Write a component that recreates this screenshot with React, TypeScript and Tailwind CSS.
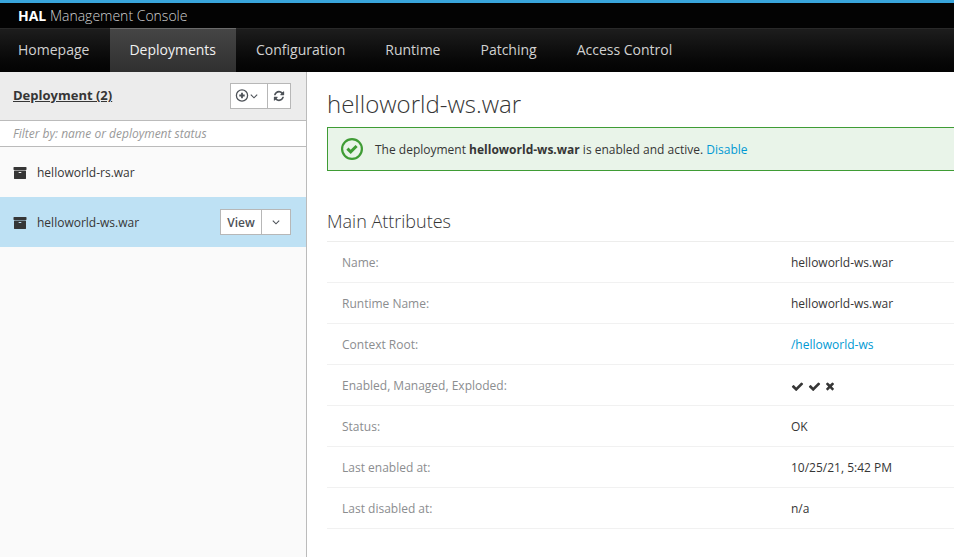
import type { ReactNode } from "react";

const ARCHIVE =
  "M1088 832q0-26-19-45t-45-19h-256q-26 0-45 19t-19 45 19 45 45 19h256q26 0 45-19t19-45zm576-192v960q0 26-19 45t-45 19h-1408q-26 0-45-19t-19-45v-960q0-26 19-45t45-19h1408q26 0 45 19t19 45zm64-448v256q0 26-19 45t-45 19h-1536q-26 0-45-19t-19-45v-256q0-26 19-45t45-19h1536q26 0 45 19t19 45z";
const CHECK =
  "M1671 566q0 40-28 68l-724 724-136 136q-28 28-68 28t-68-28l-136-136-362-362q-28-28-28-68t28-68l136-136q28-28 68-28t68 28l294 295 656-657q28-28 68-28t68 28l136 136q28 28 28 68z";
const TIMES =
  "M1490 1322q0 40-28 68l-136 136q-28 28-68 28t-68-28l-294-294-294 294q-28 28-68 28t-68-28l-136-136q-28-28-28-68t28-68l294-294-294-294q-28-28-28-68t28-68l136-136q28-28 68-28t68 28l294 294 294-294q28-28 68-28t68 28l136 136q28 28 28 68t-28 68l-294 294 294 294q28 28 28 68z";
const REFRESH =
  "M1639 1056q0 5-1 7-64 268-268 434.5t-478 166.5q-146 0-282.5-55t-243.5-157l-129 129q-19 19-45 19t-45-19-19-45v-448q0-26 19-45t45-19h448q26 0 45 19t19 45-19 45l-137 137q71 66 161 102t187 36q134 0 250-65t186-179q11-17 53-117 8-23 30-23h192q13 0 22.5 9.5t9.5 22.5zm25-800v448q0 26-19 45t-45 19h-448q-26 0-45-19t-19-45 19-45l138-138q-148-137-349-137-134 0-250 65t-186 179q-11 17-53 117-8 23-30 23h-199q-13 0-22.5-9.5t-9.5-22.5v-7q65-268 270-434.5t480-166.5q146 0 284 55.5t245 156.5l130-129q19-19 45-19t45 19 19 45z";

function Glyph({ d, className, viewBox = "0 0 1792 1792" }: { d: string; className: string; viewBox?: string }) {
  return (
    <svg viewBox={viewBox} className={className} fill="currentColor" aria-hidden="true">
      <path d={d} />
    </svg>
  );
}

function AngleDown() {
  return (
    <svg viewBox="0 0 8 6" className="h-[6px] w-[8px]" fill="none" stroke="currentColor" strokeWidth="1.1" aria-hidden="true">
      <path d="M0.8 1.6 4 4.8 7.2 1.6" />
    </svg>
  );
}

function AddIcon() {
  return (
    <svg viewBox="0 0 14 14" className="size-[14px]" fill="none" stroke="currentColor" aria-hidden="true">
      <circle cx="7" cy="6.5" r="5.6" strokeWidth="1.3" />
      <path d="M7 3.8v5.4M4.3 6.5h5.4" strokeWidth="1.8" />
    </svg>
  );
}

function OkIcon() {
  return (
    <svg viewBox="0 0 24 24" className="size-6 shrink-0 text-[#3f9c35]" fill="none" stroke="currentColor" aria-hidden="true">
      <circle cx="12" cy="12" r="9.9" strokeWidth="2.2" />
      <path d="M7.4 11.6l3.3 3.3 5.9-5.9" strokeWidth="3" />
    </svg>
  );
}

const tabs = ["Homepage", "Deployments", "Configuration", "Runtime", "Patching", "Access Control"];

function Navigation() {
  return (
    <nav className="flex h-11 gap-px border-t border-[#292929] bg-linear-to-b from-[#1d1d1d] to-[#030303] text-sm">
      {tabs.map((tab) => {
        const active = tab === "Deployments";
        return (
          <a
            key={tab}
            href="#"
            aria-current={active ? "page" : undefined}
            className={
              active
                ? "-mt-px flex items-center border-t border-[#6b6b6b] bg-linear-to-b from-[#454545] to-[#303030] pr-5 pb-0.5 pl-[19px] text-[#f1f1f1]"
                : "flex items-center pr-5 pb-0.5 pl-[19px] text-[#d1d1d1] first:pl-[18px]"
            }
          >
            {tab}
          </a>
        );
      })}
    </nav>
  );
}

const buttonClass = "flex h-[26px] items-center border border-[#b7b7b7] bg-white text-[#4d5258]";

function Sidebar() {
  return (
    <aside className="w-[307px] shrink-0 border-r border-[#bbbbbb] bg-[#fafafa]">
      <div className="flex h-[49px] items-center justify-between border-b border-[#bbbbbb] bg-[#ececec] pr-[15px] pl-[13px]">
        <h2 className="text-[13px] font-bold underline">Deployment (2)</h2>
        <div className="flex">
          <button type="button" aria-label="Add deployment" className={`${buttonClass} w-[38px] gap-px pl-1`}>
            <AddIcon />
            <AngleDown />
          </button>
          <button type="button" aria-label="Refresh" className={`${buttonClass} -ml-px w-6 justify-center`}>
            <Glyph d={REFRESH} className="size-3" />
          </button>
        </div>
      </div>
      <input
        type="text"
        aria-label="Filter deployments"
        placeholder="Filter by: name or deployment status"
        className="block h-[26px] w-full border-b border-[#bbbbbb] bg-white px-[13px] text-xs placeholder:text-[#999999] placeholder:italic"
      />
      <ul>
        <li className="flex h-[50px] items-center pr-[15px] pl-[13px]">
          <div className="flex items-center gap-[10px] pt-0.5">
            <Glyph d={ARCHIVE} className="size-[14px]" />
            <span>helloworld-rs.war</span>
          </div>
        </li>
        <li className="flex h-[50px] items-center justify-between bg-[#bee1f4] pr-[15px] pl-[13px]">
          <div className="flex items-center gap-[10px] pt-0.5">
            <Glyph d={ARCHIVE} className="size-[14px]" />
            <span>helloworld-ws.war</span>
          </div>
          <div className="flex">
            <button type="button" className={`${buttonClass} w-[42px] justify-center pt-0.5 font-semibold`}>
              View
            </button>
            <button type="button" aria-label="More actions" className={`${buttonClass} -ml-px w-[30px] justify-center`}>
              <AngleDown />
            </button>
          </div>
        </li>
      </ul>
    </aside>
  );
}

const attributes: [string, ReactNode][] = [
  ["Name:", "helloworld-ws.war"],
  ["Runtime Name:", "helloworld-ws.war"],
  ["Context Root:", <a href="#" className="text-[#0099d3]">/helloworld-ws</a>],
  [
    "Enabled, Managed, Exploded:",
    <span className="flex gap-1">
      <Glyph d={CHECK} className="size-[13px]" />
      <Glyph d={CHECK} className="size-[13px]" />
      <Glyph d={TIMES} viewBox="192 0 1408 1792" className="h-3 w-[10px]" />
    </span>,
  ],
  ["Status:", "OK"],
  ["Last enabled at:", "10/25/21, 5:42 PM"],
  ["Last disabled at:", "n/a"],
];

export default function App() {
  return (
    <div className="flex min-h-screen flex-col bg-white font-['Open_Sans',sans-serif] text-xs text-[#363636]">
      <header className="bg-[#030303]">
        <div className="flex h-7 items-center border-t-[3px] border-[#39a5dc] px-[18px] text-sm font-light text-[#d1d1d1]">
          <span>
            <b className="font-bold text-white">HAL</b> Management Console
          </span>
        </div>
        <Navigation />
      </header>
      <div className="flex flex-1">
        <Sidebar />
        <main className="min-w-0 flex-1 pl-5">
          <h1 className="pt-4 text-2xl leading-8 font-light">helloworld-ws.war</h1>
          <div className="mt-[7px] flex h-11 items-center gap-[11px] border border-r-0 border-[#3f9c35] bg-[#e9f4e9] pl-3">
            <OkIcon />
            <p className="pt-0.5">
              The deployment <b className="font-bold">helloworld-ws.war</b> is enabled and active.{" "}
              <a href="#" className="text-[#0099d3]">Disable</a>
            </p>
          </div>
          <h2 className="mt-10 text-lg leading-5 font-light">Main Attributes</h2>
          <table className="mt-[10px] w-full table-fixed border-t border-[#ededec]">
            <tbody>
              {attributes.map(([label, value]) => (
                <tr key={label} className="h-[41px] border-b border-[#f1f1f1]">
                  <th scope="row" className="w-[74%] pt-0.5 pl-[15px] text-left font-normal text-[#8b8d8f]">
                    {label}
                  </th>
                  <td className="pt-0.5">{value}</td>
                </tr>
              ))}
            </tbody>
          </table>
        </main>
      </div>
    </div>
  );
}
